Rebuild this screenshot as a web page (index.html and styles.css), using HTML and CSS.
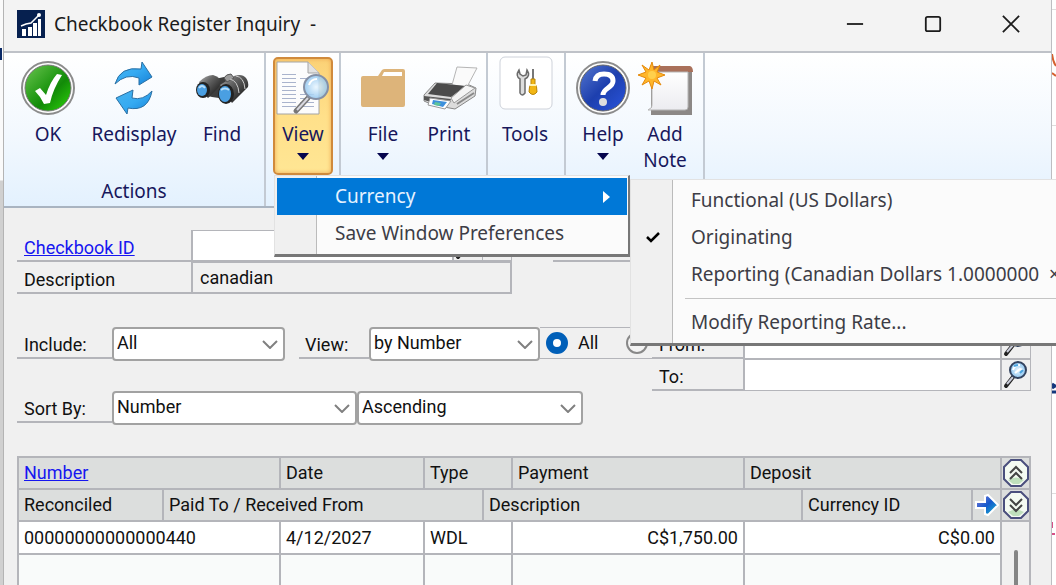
FILE: index.html
```html
<!DOCTYPE html>
<html lang="en">
<head>
<meta charset="utf-8">
<title>Checkbook Register Inquiry</title>
<link rel="stylesheet" href="styles.css">
</head>
<body>
<svg class="defs" aria-hidden="true">
  <defs>
    <linearGradient id="green" x1="0" y1="0" x2="1" y2="1"><stop offset="0" stop-color="#6cc552"/><stop offset=".45" stop-color="#259b17"/><stop offset=".6" stop-color="#128a08"/><stop offset="1" stop-color="#2fd60c"/></linearGradient>
    <linearGradient id="blue" x1="0" y1="0" x2="1" y2="1"><stop offset="0" stop-color="#5577cf"/><stop offset=".5" stop-color="#1d3fae"/><stop offset="1" stop-color="#2a55dd"/></linearGradient>
    <linearGradient id="sky" x1="0" y1="0" x2="1" y2="1"><stop offset="0" stop-color="#48b4ee"/><stop offset=".5" stop-color="#35aaf2"/><stop offset="1" stop-color="#1580d6"/></linearGradient>
    <linearGradient id="silver" x1="0" y1="0" x2="0" y2="1"><stop offset="0" stop-color="#fff"/><stop offset="1" stop-color="#ececf0"/></linearGradient>
    <linearGradient id="barrel" x1="0" y1="0" x2="1" y2="1"><stop offset="0" stop-color="#b4b4b4"/><stop offset=".35" stop-color="#666"/><stop offset=".7" stop-color="#333"/><stop offset="1" stop-color="#8a8a8a"/></linearGradient>
    <linearGradient id="arrow" x1="0" y1="0" x2="1" y2="1"><stop offset="0" stop-color="#8a7fd8"/><stop offset=".5" stop-color="#1559cc"/><stop offset="1" stop-color="#19c3cf"/></linearGradient>
    <radialGradient id="lens"><stop offset="0" stop-color="#e8f6ff"/><stop offset="1" stop-color="#8fc4ee"/></radialGradient>
    <symbol id="lookup" viewBox="0 0 28 30">
      <path d="M11 17 4 26" stroke="#222" stroke-width="4" stroke-linecap="round"/>
      <path d="M11 17 5 24" stroke="#c9ccda" stroke-width="2"/>
      <circle cx="16" cy="10" r="8" fill="url(#lens)" stroke="#33435f" stroke-width="2"/>
      <path d="M11 10c1-4 4-5 7-5M13 13l5-4 3 1" stroke="#fff" stroke-width="2" fill="none"/>
      <path d="M12 6l4-1M18 13l3-3" stroke="#4ba4df" stroke-width="2"/>
    </symbol>
  </defs>
</svg>

<div class="desktop">
  <div class="edge edge-left" aria-hidden="true"></div>
  <main class="window">
    <header class="titlebar">
      <svg class="app-icon" viewBox="0 0 28 28" aria-hidden="true">
        <path fill="#06204f" d="M0 0h28v28H0z"/>
        <path fill="#fff" d="M5 19h4v7H5zM11 17h4v9h-4zM16 13h4v13h-4zM21 9h3v17h-3z"/>
        <path d="M4 16l5-2 5-1 8-8" fill="none" stroke="#fff" stroke-width="1.500"/>
        <circle cx="22" cy="5" r="2" fill="#fff"/>
      </svg>
      <h1 class="title">Checkbook Register Inquiry&nbsp; -</h1>
      <div class="caption">
        <button class="cap" aria-label="Minimize"><svg viewBox="0 0 20 20"><path d="M1 10h18"/></svg></button>
        <button class="cap" aria-label="Maximize"><svg viewBox="0 0 20 20"><rect x="2" y="2" width="16" height="16" rx="2"/></svg></button>
        <button class="cap" aria-label="Close"><svg viewBox="0 0 20 20"><path d="M1 1l18 18M19 1 1 19"/></svg></button>
      </div>
    </header>

    <nav class="ribbon" aria-label="Commands">
      <section class="group group-actions">
        <div class="tools">
          <button class="tool tool-ok">
            <svg class="icon" viewBox="0 0 56 56" aria-hidden="true">
              <circle cx="28" cy="27" r="26" fill="#fff" stroke="#8c8c8c" stroke-width="2"/>
              <circle cx="28" cy="27" r="23" fill="url(#green)" stroke="#777" stroke-width="1"/>
              <path d="M15 30l5-3 6 7q4-13 11-21l5 1q-9 14-12 28l-6 1q-3-7-9-13z" fill="#fff"/>
            </svg>
            <span>OK</span>
          </button>
          <button class="tool tool-wide">
            <svg class="icon" viewBox="0 0 56 56" aria-hidden="true">
              <g fill="url(#sky)" stroke="#2a6fa3" stroke-width="1" stroke-linejoin="round">
                <path d="M9 23Q14 5 35 8L36 1 46 16 33 24V17Q20 12 9 23z"/>
                <path d="M46 30Q42 51 22 47L21 53 10 37 27 29 26 37Q37 40 46 30z"/>
              </g>
            </svg>
            <span>Redisplay</span>
          </button>
          <button class="tool">
            <svg class="icon" viewBox="0 0 56 56" aria-hidden="true">
              <path d="M12 20 30 16l6 0 10 2 2 8-16 12-14-2-8-2z" fill="#3d3d3d"/>
              <path d="M5 21Q12 14 19 14q7 2 8 7l-3 7-10 9-8-8z" fill="url(#barrel)"/>
              <path d="M26 24 40 15q8-3 12 2 3 4 2 9L38 42z" fill="url(#barrel)"/>
              <path d="M30 17q2-4 7-4l3 4-7 4z" fill="#9b9b9b" stroke="#555"/>
              <path d="M42 15q8 1 9 13M36 18q8 2 9 14" fill="none" stroke="#ccc"/>
              <ellipse cx="9" cy="29" rx="7" ry="8" fill="#222"/>
              <ellipse cx="8" cy="29" rx="5" ry="6" fill="#4a9fe2"/>
              <ellipse cx="32" cy="33" rx="8" ry="10" fill="#222"/>
              <ellipse cx="31" cy="33" rx="6" ry="8" fill="#4a9fe2"/>
              <path d="M5 27q3-4 6 0M27 29q4-3 8 0" fill="none" stroke="#b6defa" stroke-width="2"/>
            </svg>
            <span>Find</span>
          </button>
        </div>
        <p class="group-name">Actions</p>
      </section>

      <section class="group group-view">
        <div class="tools">
          <div class="menu-anchor">
            <button class="tool tool-active" aria-haspopup="menu" aria-expanded="true">
              <svg class="icon" viewBox="0 0 56 56" aria-hidden="true">
                <path d="M2 1h31l11 11v41H2z" fill="#fcfcfc" stroke="#a4a4a4"/>
                <path d="M33 1v11h11" fill="#e2e2e2" stroke="#a4a4a4"/>
                <path d="M7 13.500h14M7 17.500h14M7 21.500h14M7 25.500h14M7 29.500h14M7 33.500h14M7 37.500h14M7 41.500h14M7 45.500h14M25 17.500h8M25 37.500h14M25 41.500h14M25 45.500h14M25 33.500h14" stroke="#a9b3cc"/>
                <path d="M33 37 21 50" stroke="#777" stroke-width="5" stroke-linecap="round"/>
                <path d="M33 37 22 49" stroke="#d8d8e0" stroke-width="2"/>
                <circle cx="41" cy="26" r="12" fill="url(#lens)" fill-opacity=".85" stroke="#8590a5" stroke-width="2"/>
                <path d="M34 24q2-6 8-6" fill="none" stroke="#fff" stroke-width="2"/>
              </svg>
              <span>View</span>
              <i class="caret"></i>
            </button>
            <ul class="menu" role="menu">
              <li class="menu-anchor">
                <button class="item item-selected" role="menuitem">Currency<i class="arrow-right"></i></button>
                <ul class="menu submenu" role="menu">
                  <li><button class="item" role="menuitem"><i class="mark"></i>Functional (US Dollars)</button></li>
                  <li><button class="item" role="menuitem"><i class="mark"><svg viewBox="0 0 16 14" aria-hidden="true"><path d="M2 6l4 4 8-8" fill="none" stroke="#000" stroke-width="2.500"/></svg></i>Originating</button></li>
                  <li><button class="item" role="menuitem"><i class="mark"></i>Reporting (Canadian Dollars 1.0000000&nbsp; ×</button></li>
                  <li class="separator" role="separator"></li>
                  <li><button class="item" role="menuitem"><i class="mark"></i>Modify Reporting Rate...</button></li>
                </ul>
              </li>
              <li><button class="item" role="menuitem">Save Window Preferences</button></li>
            </ul>
          </div>
        </div>
      </section>

      <section class="group group-file">
        <div class="tools">
          <button class="tool">
            <svg class="icon" viewBox="0 0 56 56" aria-hidden="true">
              <path d="M6 17q0-2 2-2h15l4-6q1-1 3-1h18q2 0 2 2v34q0 2-2 2H8q-2 0-2-2z" fill="#ddb47a"/>
              <path d="M27 15l2-4h18v4z" fill="#fff"/>
            </svg>
            <span>File</span>
            <i class="caret"></i>
          </button>
          <button class="tool">
            <svg class="icon" viewBox="0 0 56 56" aria-hidden="true">
              <path d="M3 34 14 22l32 1 9 4-1 8-20 13-22-4-9-4z" fill="#dcdcdc" stroke="#888"/>
              <path d="M31 24 36 6l20 1-10 19z" fill="#fafafa" stroke="#b5b5b5"/>
              <path d="M7 33 16 22l29 3-15 11z" fill="#4b4b4b"/>
              <path d="M30 37 45 24l9 3-21 15z" fill="#f4f4f4" stroke="#999"/>
              <path d="M36 43 53 32" stroke="#888" stroke-width="2"/>
              <path d="M3 35l27 3-3 6-14-2-10-3z" fill="#555"/>
              <path d="M9 37l21 3-6 8-17-4z" fill="#fff" stroke="#999"/>
              <path d="M12 39l14 2-4 5-11-3z" fill="#3d90dc"/>
              <path d="M14 41l6 1-2 3-5-1z" fill="#5fc49a"/>
            </svg>
            <span>Print</span>
          </button>
        </div>
      </section>

      <section class="group group-tools">
        <div class="tools">
          <button class="tool">
            <svg class="icon" viewBox="0 0 56 56" aria-hidden="true">
              <rect x="3" y="-4" width="52" height="52" rx="5" fill="#fff" stroke="#ced2da"/>
              <path d="M22 9q-4 6 1 9v14q2 4 5 0V18q6-3 2-9l-1 5-3 1-3-2z" fill="#ddd" stroke="#6b6b6b" stroke-width="1.500"/>
              <path d="M36 8v12" stroke="#777" stroke-width="2"/>
              <path d="M34 18h4v5q2 1 2 8-4 5-8 0 0-6 2-8z" fill="#f2b614" stroke="#b98508"/>
              <path d="M33 24h6" stroke="#fff3b0" stroke-width="2"/>
            </svg>
            <span>Tools</span>
          </button>
        </div>
      </section>

      <section class="group group-help">
        <div class="tools">
          <button class="tool">
            <svg class="icon" viewBox="0 0 56 56" aria-hidden="true">
              <circle cx="28" cy="27" r="26" fill="#fff" stroke="#8c8c8c" stroke-width="2"/>
              <circle cx="28" cy="27" r="23" fill="url(#blue)" stroke="#666"/>
              <path d="M20 20q1-7 9-7 9 0 9 7c0 7-10 7-10 14" fill="none" stroke="#fff" stroke-width="5"/>
              <circle cx="28" cy="41" r="4" fill="#ddd"/>
            </svg>
            <span>Help</span>
            <i class="caret"></i>
          </button>
          <button class="tool">
            <svg class="icon" viewBox="0 0 56 56" aria-hidden="true">
              <path d="M14 10h41v44H14z" fill="#8c8886"/>
              <path d="M14 5h39q3 1 3 6H14z" fill="#a9705a"/>
              <path d="M15 11h36v35q0 3-3 3H11q5-2 4-6z" fill="url(#silver)" stroke="#b5b5b5"/>
              <path d="M15 1l2 8 6-5-3 7 8 3-8 3 4 7-7-4-2 8-3-8-7 4 4-7-8-3 8-3-4-7 7 5z" fill="#ffb62b" stroke="#e58a0c"/>
              <circle cx="15" cy="14" r="4" fill="#ffd04c"/>
            </svg>
            <span>Add<br>Note</span>
          </button>
        </div>
      </section>
    </nav>

    <form class="form">
      <div class="top">
        <div class="record">
          <div class="label"><a class="link" href="#checkbook">Checkbook ID</a></div>
          <div class="entry"><input class="box" type="text" aria-label="Checkbook ID"><span class="slot"><svg class="lookup" aria-hidden="true"><use href="#lookup"/></svg></span><span class="slot"></span></div>
          <label class="label" for="desc">Description</label>
          <input class="box box-readonly" id="desc" type="text" value="canadian" readonly>
        </div>
        <div class="rule"></div>
      </div>

      <div class="filters">
        <label class="label label-short" for="include">Include:</label>
        <span class="select select-include"><select id="include"><option>All</option></select><svg viewBox="0 0 16 10" aria-hidden="true"><path d="M1 2l7 7 7-7"/></svg></span>
        <label class="label label-view" for="view">View:</label>
        <span class="select select-view"><select id="view"><option>by Number</option></select><svg viewBox="0 0 16 10" aria-hidden="true"><path d="M1 2l7 7 7-7"/></svg></span>
        <div class="range">
          <div class="radios">
            <label class="radio"><input type="radio" name="range" checked>All</label>
            <label class="radio"><input type="radio" name="range" aria-label="From"></label>
          </div>
          <label class="label" for="from">From:</label>
          <input class="box" id="from" type="text">
          <button class="slot" type="button" aria-label="Look up from"><svg class="lookup" aria-hidden="true"><use href="#lookup"/></svg></button>
          <label class="label label-to" for="to">To:</label>
          <input class="box" id="to" type="text">
          <button class="slot" type="button" aria-label="Look up to"><svg class="lookup" aria-hidden="true"><use href="#lookup"/></svg></button>
        </div>
      </div>

      <div class="sort">
        <label class="label label-short" for="sort">Sort By:</label>
        <span class="select select-sort"><select id="sort"><option>Number</option></select><svg viewBox="0 0 16 10" aria-hidden="true"><path d="M1 2l7 7 7-7"/></svg></span>
        <span class="select select-order"><select aria-label="Order"><option>Ascending</option></select><svg viewBox="0 0 16 10" aria-hidden="true"><path d="M1 2l7 7 7-7"/></svg></span>
      </div>

      <table class="register">
        <colgroup>
          <col class="c145"><col class="c117"><col class="c144"><col class="c59"><col class="c29"><col class="c232"><col class="c58"><col><col class="c29"><col class="c29">
        </colgroup>
        <thead>
          <tr>
            <th colspan="2"><a class="link" href="#number">Number</a></th><th>Date</th><th colspan="2">Type</th><th>Payment</th><th colspan="3">Deposit</th>
            <th class="tight"><button class="mini" type="button" aria-label="Hide details"><svg viewBox="0 0 26 28"><path d="M8 1h10l7 7v12l-7 7H8l-7-7V8z" fill="#f4faf2" stroke="#4a4f7d" stroke-width="2"/><path d="M5 21q8-5 16 0l-5 4h-6z" fill="#bfe0bc"/><path d="M7 14l6-6 6 6M7 20l6-6 6 6" fill="none" stroke="#444" stroke-width="2"/></svg></button></th>
          </tr>
          <tr>
            <th>Reconciled</th><th colspan="3">Paid To / Received From</th><th colspan="3">Description</th><th>Currency ID</th>
            <th class="tight"><button class="mini" type="button" aria-label="Next"><svg viewBox="0 0 26 28"><path d="M3 11h9V5l3-1 10 10-10 10-3-1v-6H3z" fill="url(#arrow)" stroke="#fff" stroke-width="2"/></svg></button></th>
            <th class="tight"><button class="mini" type="button" aria-label="Show details"><svg viewBox="0 0 26 28"><path d="M8 1h10l7 7v12l-7 7H8l-7-7V8z" fill="#f4faf2" stroke="#4a4f7d" stroke-width="2"/><path d="M5 21q8-5 16 0l-5 4h-6z" fill="#bfe0bc"/><path d="M7 8l6 6 6-6M7 14l6 6 6-6" fill="none" stroke="#444" stroke-width="2"/></svg></button></th>
          </tr>
        </thead>
        <tbody>
          <tr><td colspan="2">00000000000000440</td><td>4/12/2027</td><td colspan="2">WDL</td><td class="num">C$1,750.00</td><td class="num" colspan="3">C$0.00</td><td class="track" rowspan="2"><div class="thumb"></div></td></tr>
          <tr class="blank"><td colspan="2"></td><td></td><td colspan="2"></td><td></td><td colspan="3"></td></tr>
        </tbody>
      </table>
    </form>
  </main>
  <div class="edge edge-right" aria-hidden="true"><svg viewBox="0 0 4 585" preserveAspectRatio="xMinYMin slice"><path d="M0 9.500h4M0 125.500h4M0 493.500h4" stroke="#ddd"/><path d="M0 54q1 8 4 12M0 73l4 3" stroke="#d5602e" stroke-width="2" fill="none"/><path d="M0 384l3 2-3 2M0 392h4" stroke="#14377d" stroke-width="3" fill="none"/><path d="M0 522v6M0 534h3" stroke="#d65088" stroke-width="2"/></svg></div>
</div>
</body>
</html>
```
FILE: styles.css
```css
* { box-sizing: border-box; }

body {
  margin: 0;
  overflow: hidden;
  background: #fff;
  color: #111;
  font: 18px/24px Roboto, "Liberation Sans", sans-serif;
}

button, input, select { font: inherit; color: inherit; margin: 0; }
button { border: 0; padding: 0; background: none; }
ul, p, h1 { margin: 0; padding: 0; list-style: none; }
.defs { position: absolute; width: 0; height: 0; }

.desktop { display: flex; height: 100vh; min-height: 400px; overflow: hidden; }
.edge { flex: none; overflow: hidden; }
.edge-left {
  width: 4px;
  border-right: 1px solid #b4b4b4;
  background:
    linear-gradient(#0b2a66, #0b2a66) 0 48px / 2px 12px no-repeat,
    linear-gradient(#fafafa 0 180px, #d0d0d0 181px);
}
.edge-right { width: 4px; }
.edge-right svg { display: block; width: 4px; height: 585px; }
.window {
  flex: 1;
  min-width: 0;
  display: flex;
  flex-direction: column;
  border-right: 1px solid #bdbec2;
  background: #f0f0f0;
}

/* Title bar */
.titlebar {
  display: flex;
  align-items: center;
  height: 53px;
  flex: none;
  padding: 0 1px 3px 13px;
  border-bottom: 2px solid #bfc2c8;
  background: #f3f3f3;
}
.app-icon { width: 28px; height: 28px; }
.title { flex: 1; margin-left: 9px; font: 19px/28px "Noto Sans", sans-serif; color: #1b1b1b; }
.caption { display: flex; }
.cap { display: grid; place-items: center; width: 78px; height: 48px; }
.cap svg { width: 18px; height: 18px; fill: none; stroke: #1b1b1b; stroke-width: 2; }

/* Ribbon */
.ribbon {
  display: flex;
  flex: none;
  height: 155px;
  border-bottom: 2px solid #a9b4c1;
  background: linear-gradient(#fff, #f2f8fe 55%, #e3f1fe);
  font: 19px/26px "Noto Sans", sans-serif;
  color: #17175c;
}
.group {
  display: flex;
  flex-direction: column;
  justify-content: space-between;
  padding: 4px 0 2px 7px;
  border-right: 2px solid #c3cad3;
}
.group-actions { width: 262px; padding-left: 16px; }
.group-view { width: 75px; }
.group-file { width: 147px; padding-left: 12px; }
.group-tools { width: 78px; }
.group-help { width: 139px; }
.group-actions .tools { gap: 8px; }
.group-file .tools { gap: 6px; }
.group-help .tools { gap: 2px; }
.tools { display: flex; }
.tool {
  display: flex;
  flex-direction: column;
  align-items: center;
  width: 60px;
  height: 118px;
  padding-top: 4px;
}
.tool-ok { width: 56px; }
.tool-wide { width: 100px; }
.tool-active {
  padding-top: 2px;
  border: 2px solid #d08a3c;
  border-radius: 5px;
  background: linear-gradient(#fbd277, #ffe08a 50%, #ffe694);
  box-shadow: inset 0 0 4px #f0a850;
}
.icon { flex: none; width: 56px; height: 56px; margin-bottom: 4px; overflow: visible; }
.caret { margin-top: 6px; border: 6px solid transparent; border-top: 7px solid #05054e; border-bottom: 0; }
.group-name { padding-right: 16px; text-align: center; }

/* Menus */
.menu-anchor { position: relative; }
.menu {
  position: absolute;
  z-index: 2;
  top: 118px;
  left: 1px;
  width: 356px;
  padding: 2px 1px 2px 2px;
  border: 1px solid #e2e2e2;
  border-right: 2px solid #777;
  border-bottom: 3px solid #777;
  background: linear-gradient(90deg, #f0f0f0 41px, #bbb 41px 42px, #fbfbfb 42px);
  font: 19px/37px "Noto Sans", sans-serif;
  color: #3d3d46;
}
.item { display: flex; align-items: center; width: 100%; height: 37px; padding-left: 58px; white-space: nowrap; text-align: left; }
.item-selected { background: #0078d7; color: #e6f2ff; }
.arrow-right { margin-left: auto; margin-right: 17px; border: 6px solid transparent; border-left: 7px solid #fff; border-right: 0; }
.submenu { top: 1px; left: 353px; width: 440px; }
.submenu .item { padding-left: 0; }
.mark { flex: none; display: grid; place-items: center; width: 40px; margin-right: 18px; }
.mark svg { width: 16px; height: 14px; }
.separator { height: 1px; margin: 5px 0 5px 52px; background: #c4c4c4; }

/* Form */
.form { padding: 22px 20px 0 13px; }
.label { padding: 6px 0 0 7px; border-bottom: 2px solid #b4b5ba; white-space: nowrap; }
.link { color: #1616f0; text-decoration: underline; }
.box {
  min-width: 0;
  width: 100%;
  padding: 0 7px;
  border: 2px solid #b4b5ba;
  border-top-width: 1px;
  border-bottom-width: 1px;
  border-radius: 0;
  background: #fff;
}
.box-readonly { background: #f0f0f0; border-bottom-width: 2px; }
.top { display: flex; }
.record { display: grid; grid-template-columns: 174px 321px; grid-auto-rows: 32px; }
.entry { display: flex; border-bottom: 1px solid #b4b5ba; }
.slot { display: grid; place-items: center; flex: none; width: 29px; border: 1px solid #b4b5ba; border-left: 0; }
.lookup { width: 28px; height: 30px; }
.rule { flex: 1; height: 32px; margin-left: 41px; border-bottom: 2px solid #b4b5ba; }

.filters { display: flex; align-items: flex-start; margin-top: 33px; }
.filters > .label, .sort > .label { height: 32px; }
.label-short { width: 95px; }
.label-view { width: 70px; margin-left: 14px; padding-left: 6px; }
.select { display: grid; align-items: center; height: 34px; }
.select > * { grid-area: 1 / 1; }
.select select {
  appearance: none;
  width: 100%;
  height: 100%;
  padding: 0 28px 2px 3px;
  border: 2px solid #a2a2a2;
  border-radius: 4px;
  background: #fff;
}
.select svg { justify-self: end; width: 16px; height: 10px; margin-right: 7px; fill: none; stroke: #808080; stroke-width: 2; }
.select-include { width: 173px; }
.select-view { width: 171px; }
.select-sort { width: 245px; }
.select-order { width: 226px; }
.range {
  flex: 1;
  display: grid;
  grid-template-columns: 112px 91px 1fr 29px;
  grid-auto-rows: 32px;
}
.radios { display: flex; align-items: center; gap: 27px; padding-left: 6px; border: 1px solid #b4b5ba; border-left: 0; border-right: 0; }
.radio { display: flex; align-items: center; gap: 10px; }
.radio input { appearance: none; width: 22px; height: 22px; border: 2px solid #888; border-radius: 50%; background: #f4f4f4; }
.radio input:checked { border: 7px solid #005fb8; background: #fff; }
.label-to { grid-column: 2; }
.sort { display: flex; }

/* Register table */
.register { width: 100%; margin-top: 31px; table-layout: fixed; border-collapse: collapse; background: #fff; }
.register th, .register td { height: 32px; padding: 0 5px; border: 2px solid #b4b5ba; font-weight: 400; text-align: left; white-space: nowrap; }
.register th { background: #dcdedd; }
.register .num { text-align: right; }
.register .tight { padding: 0; }
.register .track { padding: 28px 0 0; background: #f0f0f0; vertical-align: top; }
.thumb { width: 4px; height: 36px; margin: 0 auto; border-radius: 2px 2px 0 0; background: #858585; }
.register .blank td { background: #f9fbfa; }
.mini { display: grid; place-items: center; width: 100%; }
.mini svg { width: 26px; height: 28px; }
.c29 { width: 29px; }
.c58 { width: 58px; }
.c59 { width: 59px; }
.c117 { width: 117px; }
.c144 { width: 144px; }
.c145 { width: 145px; }
.c232 { width: 232px; }
```
